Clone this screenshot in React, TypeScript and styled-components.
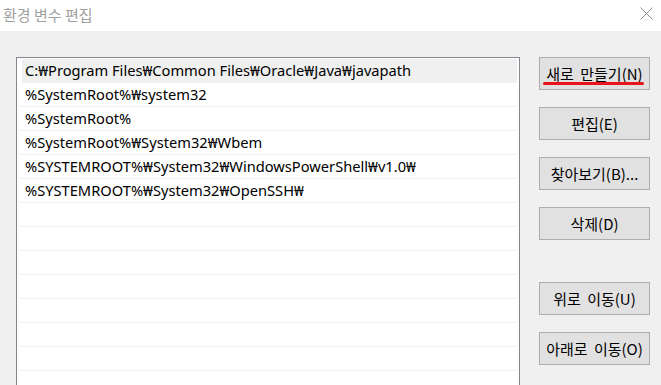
import styled, { createGlobalStyle } from 'styled-components'

const paths = [
  'C:\u20A9Program Files\u20A9Common Files\u20A9Oracle\u20A9Java\u20A9javapath',
  '%SystemRoot%\u20A9system32',
  '%SystemRoot%',
  '%SystemRoot%\u20A9System32\u20A9Wbem',
  '%SYSTEMROOT%\u20A9System32\u20A9WindowsPowerShell\u20A9v1.0\u20A9',
  '%SYSTEMROOT%\u20A9System32\u20A9OpenSSH\u20A9',
]

const ROW_COUNT = 14

const GlobalStyle = createGlobalStyle`
  html, body {
    margin: 0;
    padding: 0;
    background: #f0f0f0;
  }
  body {
    font-family: "Noto Sans", "Noto Sans CJK KR", sans-serif;
  }
`

function App(): JSX.Element {
  const rows = Array.from({ length: ROW_COUNT }, (_, i) => paths[i] ?? '')

  return (
    <Window>
      <GlobalStyle />
      <TitleBar>
        <Title>환경 변수 편집</Title>
        <CloseIcon width="13" height="13" viewBox="0 0 13 13">
          <path d="M0.5 0.5 L12.5 12.5 M12.5 0.5 L0.5 12.5" stroke="#8f8f8f" strokeWidth="1" fill="none" />
        </CloseIcon>
      </TitleBar>
      <Body>
        <PathList>
          {rows.map((p, idx) => (
            <PathRow key={idx} selected={idx === 0}>
              {p}
            </PathRow>
          ))}
        </PathList>
        <Buttons>
          <Button type="button">
            새로 만들기(N)
            <Mark />
          </Button>
          <Button type="button">편집(E)</Button>
          <Button type="button">찾아보기(B)...</Button>
          <Button type="button">삭제(D)</Button>
          <Spacer />
          <Button type="button">위로 이동(U)</Button>
          <Button type="button">아래로 이동(O)</Button>
        </Buttons>
      </Body>
    </Window>
  )
}

const Window = styled.div`
  width: 661px;
  height: 385px;
  overflow: hidden;
  background: #f0f0f0;
  display: flex;
  flex-direction: column;
`

const TitleBar = styled.div`
  height: 31px;
  flex: none;
  background: #ffffff;
  display: flex;
  align-items: center;
  justify-content: space-between;
  padding: 0 8px 0 3px;
`

const Title = styled.span`
  font-family: "Noto Sans CJK KR", sans-serif;
  font-size: 15px;
  color: #a0a0a0;
  margin-top: -2px;
`

const CloseIcon = styled.svg`
  display: block;
  margin-top: -4px;
`

const Body = styled.div`
  display: flex;
  gap: 19px;
  padding: 26px 11px 0 16px;
`

const PathList = styled.div`
  width: 504px;
  height: 340px;
  flex: none;
  box-sizing: border-box;
  border: 1px solid #828790;
  background: #ffffff;
  padding: 1px 2px 0 1px;
  overflow: hidden;
`

const PathRow = styled.div<{ selected?: boolean }>`
  height: 24px;
  box-sizing: border-box;
  border-bottom: 1px solid #f0f0f0;
  background: ${(p) => (p.selected ? '#f0f0f0' : '#ffffff')};
  margin-left: ${(p) => (p.selected ? '4px' : '1px')};
  padding-left: ${(p) => (p.selected ? '3px' : '6px')};
  font-size: 14.67px;
  line-height: 23px;
  color: #000000;
  white-space: nowrap;
`

const Buttons = styled.div`
  display: flex;
  flex-direction: column;
  gap: 17px;
`

const Spacer = styled.div`
  height: 25px;
  margin: -17px 0 0;
`

const Button = styled.button`
  position: relative;
  width: 111px;
  height: 33px;
  box-sizing: border-box;
  border: 1px solid #adadad;
  background: #e1e1e1;
  color: #000000;
  font-family: "Noto Sans CJK KR", sans-serif;
  font-size: 15px;
  word-spacing: 3px;
  padding: 0;
  white-space: nowrap;
  cursor: pointer;
`

const Mark = styled.span`
  position: absolute;
  left: 3px;
  top: 24px;
  width: 101px;
  height: 3px;
  border-radius: 2px;
  background: #e8161c;
`

export default App
